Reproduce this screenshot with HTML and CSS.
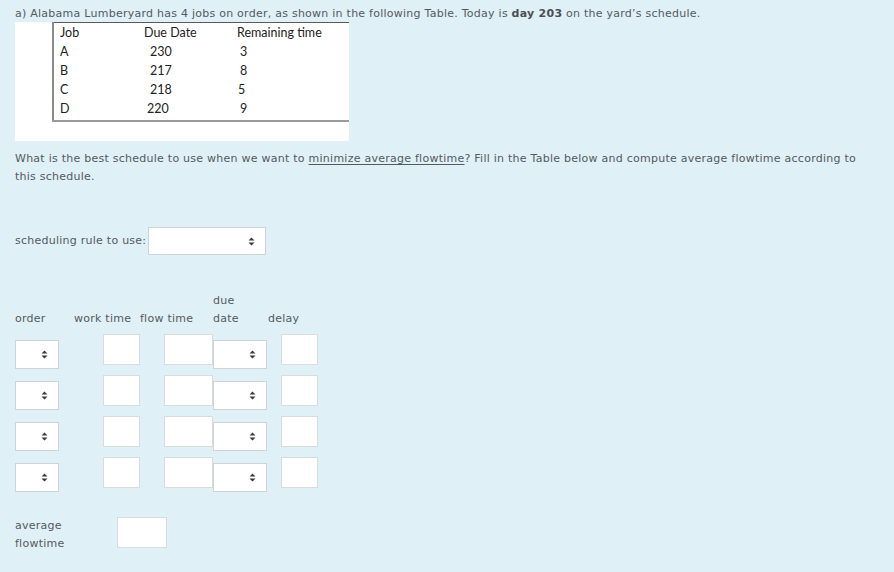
FILE: index.html
```html
<!DOCTYPE html>
<html lang="en">
<head>
    <meta charset="UTF-8">
    <title>Alabama Lumberyard</title>
    <link rel="stylesheet" href="styles.css">
</head>
<body>
<div class="que">
    <p class="intro">a) Alabama Lumberyard has 4 jobs on order, as shown in the following Table. Today is <b>day 203</b> on the yard’s schedule.</p>

    <div class="figure">
        <table class="jobs">
            <tr><th>Job</th><th>Due Date</th><th>Remaining time</th></tr>
            <tr><td>A</td><td class="d">230</td><td class="r">3</td></tr>
            <tr><td>B</td><td class="d">217</td><td class="r">8</td></tr>
            <tr><td>C</td><td class="d">218</td><td class="r r5">5</td></tr>
            <tr class="last"><td>D</td><td class="d d4">220</td><td class="r">9</td></tr>
        </table>
    </div>

    <p class="question"><span>What is the best schedule to use when we want to </span><u>minimize average flowtime</u><span>? Fill in the Table below and compute average flowtime according to</span> <span>this schedule.</span></p>

    <div class="rule">
        <span>scheduling rule to use:</span>
        <div class="select wide">
            <svg width="7" height="9" viewBox="0 0 7 9"><path d="M0.5 3.6 L3.5 0.4 L6.5 3.6 Z M0.5 5.4 L3.5 8.6 L6.5 5.4 Z"/></svg>
        </div>
    </div>

    <div class="answers" id="answers">
        <div class="head">order</div>
        <div class="head">work time</div>
        <div class="head">flow time</div>
        <div class="head">due<br>date</div>
        <div class="head">delay</div>
    </div>

    <div class="average">
        <div class="label">average<br>flowtime</div>
        <div class="field avg"></div>
    </div>
</div>

<script>
    const answers = document.getElementById('answers');
    const arrow = '<svg width="7" height="9" viewBox="0 0 7 9"><path d="M0.5 3.6 L3.5 0.4 L6.5 3.6 Z M0.5 5.4 L3.5 8.6 L6.5 5.4 Z"/></svg>';

    function cell(cls, inner) {
        const div = document.createElement('div');
        div.className = cls;
        div.innerHTML = inner || '';
        answers.appendChild(div);
    }

    // 4 rows: order, work time, flow time, due date, delay
    for (let i = 0; i < 4; i++) {
        cell('select order', arrow);
        cell('field work');
        cell('field flow');
        cell('select due', arrow);
        cell('field delay');
    }
</script>
</body>
</html>
```

FILE: styles.css
```css
html, body {
    margin: 0;
    padding: 0;
}

body {
    background-color: #dff0f7;
    color: #555a5e;
    font-family: "DejaVu Sans", sans-serif;
    font-size: 11px;
    line-height: 18px;
    letter-spacing: 0.25px;
    width: 894px;
    height: 572px;
    overflow: hidden;
}

.que {
    padding: 5px 15px 0;
}

p {
    margin: 0;
}

.intro b {
    color: #4a4f53;
}

.figure {
    width: 334px;
    height: 119px;
    background-color: #fff;
    margin-top: -1px;
}

.jobs {
    margin-left: 37px;
    width: 297px;
    border-collapse: collapse;
    border-top: 1px solid #5a5a5a;
    border-left: 2px solid #8a8a8a;
    border-bottom: 2px solid #9a9a9a;
    font-family: Lato, "Liberation Sans", sans-serif;
    font-size: 12.5px;
    letter-spacing: 0;
    color: #222;
}

.jobs th,
.jobs td {
    height: 19px;
    padding: 0 0 0 6px;
    text-align: left;
    vertical-align: top;
    font-weight: normal;
    line-height: 19px;
}

.jobs .last td {
    height: 21px;
}

.jobs th:nth-child(1) { width: 78px; }
.jobs th:nth-child(2) { width: 87px; }

.jobs td.d { padding-left: 12px; }
.jobs td.d4 { padding-left: 9px; }
.jobs td.r { padding-left: 9px; }
.jobs td.r5 { padding-left: 7px; }

.question {
    margin-top: 9px;
    width: 858px;
}

.question u {
    text-underline-offset: 2px;
}

.rule {
    display: flex;
    align-items: center;
    gap: 2px;
    margin-top: 41px;
}

.select {
    box-sizing: border-box;
    height: 29px;
    background-color: #fff;
    border: 1px solid #cdd3d8;
    display: flex;
    align-items: center;
    justify-content: flex-end;
    padding-right: 10px;
}

.select svg {
    fill: #3a3a3a;
}

.select.wide {
    width: 118px;
    height: 28px;
}

.field {
    box-sizing: border-box;
    height: 31px;
    background-color: #fff;
    border: 1px solid #d9dcdf;
}

.answers {
    display: grid;
    grid-template-columns: 59px 66px 73px 55px 62px;
    grid-template-rows: 36px;
    grid-auto-rows: 35px;
    row-gap: 6px;
    margin-top: 37px;
    align-items: start;
}

.answers .head {
    align-self: end;
    white-space: nowrap;
}

.order {
    width: 44px;
    margin-top: 6px;
}

.work {
    width: 37px;
    margin-left: 29px;
}

.flow {
    width: 49px;
    margin-left: 24px;
}

.due {
    width: 54px;
    margin-top: 6px;
}

.delay {
    width: 37px;
    margin-left: 13px;
}

.average {
    display: flex;
    align-items: flex-start;
    margin-top: 25px;
}

.average .label {
    width: 102px;
}

.avg {
    width: 50px;
}
```
